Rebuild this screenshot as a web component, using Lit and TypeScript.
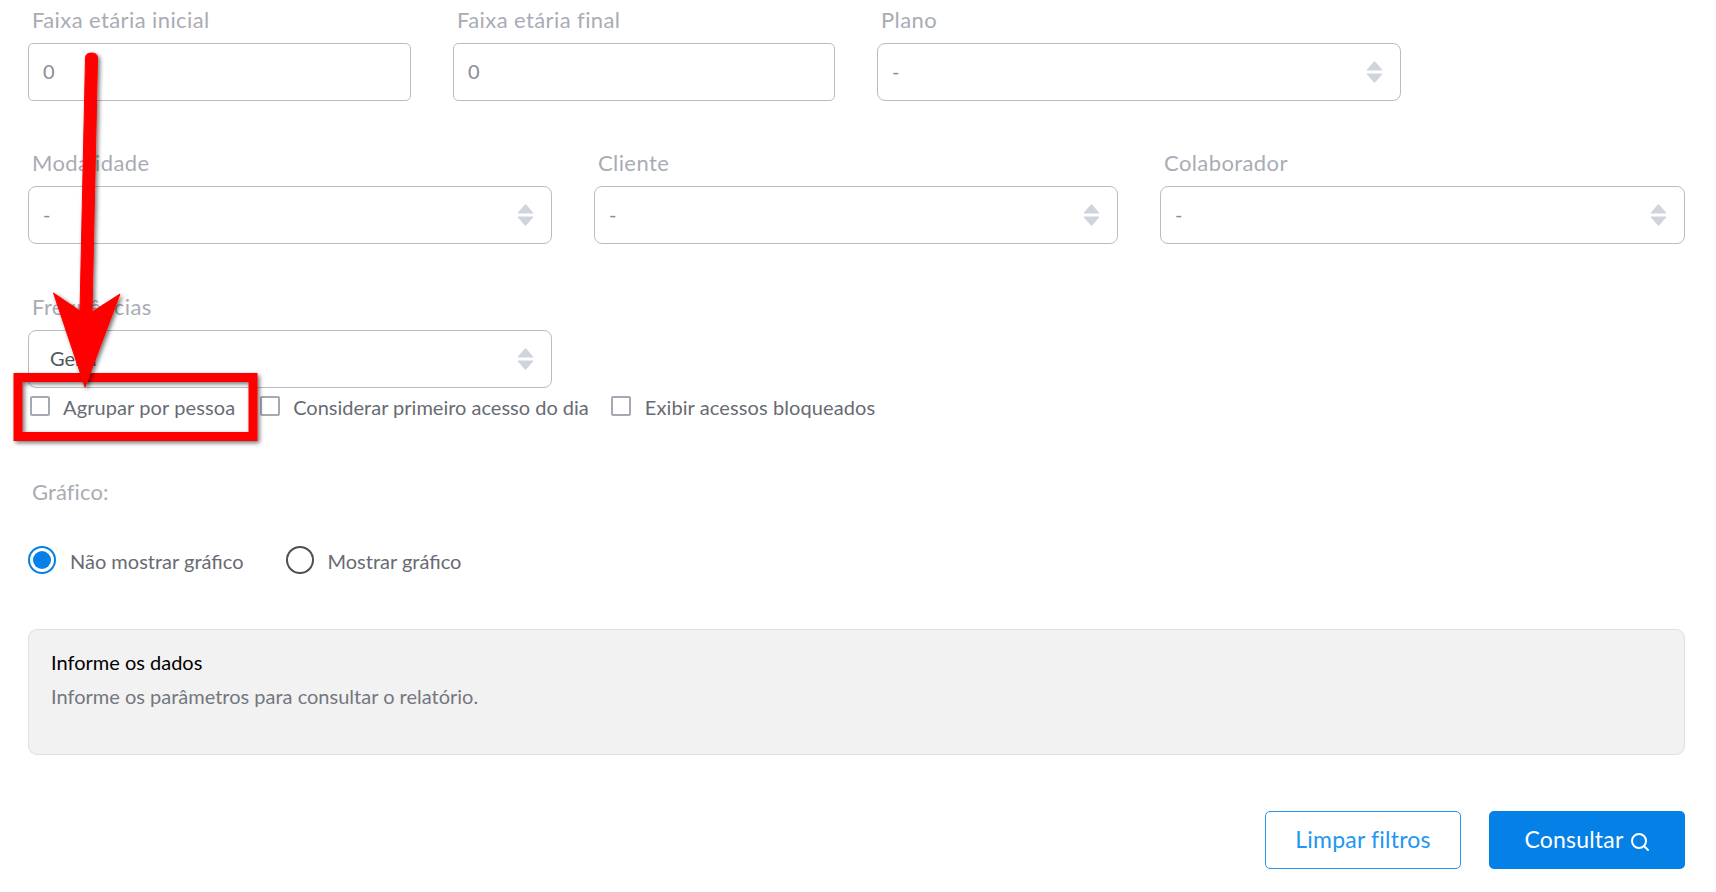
import { LitElement, html, css } from "lit";
import { customElement } from "lit/decorators.js";

const arrows = html`<svg class="sort" width="17" height="22" viewBox="0 0 17 22"><path d="M8.5 0.5 L16 9 H1 Z M1 13 H16 L8.5 21.5 Z" fill="#d0d3dc" stroke="#d0d3dc" stroke-linejoin="round"/></svg>`;

@customElement("app-root")
export class AppRoot extends LitElement {
  static styles = css`
    :host { display: block; width: 1716px; height: 892px; position: relative; overflow: hidden; background: #fff; font-family: "Lato", "Noto Sans", sans-serif; color: #6b6e75; }
    .page { padding: 7px 31px 0 28px; display: flex; flex-direction: column; }
    .row { display: flex; gap: 42px; }
    .row.first { margin-bottom: 49px; }
    .row.second { margin-bottom: 50px; }
    .field { display: flex; flex-direction: column; flex: none; }
    .w383 { width: 383px; } .w382 { width: 382px; } .w524 { width: 524px; } .w525 { width: 525px; }
    .label { font-size: 22px; line-height: 26px; height: 36px; padding-left: 4px; color: #a9acb5; letter-spacing: 0.4px; }
    .box { height: 58px; box-sizing: border-box; border: 1px solid #b9bbc7; border-radius: 5px; display: flex; align-items: center; justify-content: space-between; padding: 0 17px 2px 14px; font-size: 20px; color: #8a8d95; background: #fff; }
    .box.sel { border-radius: 8px; }
    .box.dark { color: #51555e; padding-left: 21px; }
    .sort { margin-top: 2px; }
    .checks { display: flex; height: 38px; align-items: center; font-size: 20px; color: #686b73; }
    .check { display: flex; align-items: center; gap: 13px; margin-right: 25px; }
    .cb { width: 20px; height: 20px; box-sizing: border-box; border: 2px solid #a6a9b3; border-radius: 2px; margin-top: -2px; }
    .c1 { margin-left: 2px; letter-spacing: 0.1px; }
    .c2 { margin-right: 22px; }
    .c3 { gap: 14px; letter-spacing: 0.1px; }
    .chart { margin-top: 53px; height: 37px; letter-spacing: 0.1px; }
    .radios { display: flex; margin-top: 25px; font-size: 20px; color: #686b73; align-items: center; height: 40px; }
    .radio { display: flex; align-items: center; gap: 14px; margin-right: 42px; }
    .rd { width: 28px; height: 28px; box-sizing: border-box; border-radius: 50%; border: 2px solid #4d4f55; margin-top: -3px; }
    .rd.on { border-color: #0480e6; display: flex; align-items: center; justify-content: center; }
    .rd.on::after { content: ""; width: 18px; height: 18px; border-radius: 50%; background: #0480e6; }
    .info { margin-top: 48px; height: 126px; width: 1657px; box-sizing: border-box; background: #f2f2f2; border: 1px solid #dfdfdf; border-radius: 9px; padding: 20px 22px; }
    .info h4 { margin: 0; font-size: 20px; line-height: 24px; font-weight: 400; color: #000; }
    .info p { margin: 10px 0 0; font-size: 20px; line-height: 24px; color: #74777e; }
    .actions { display: flex; justify-content: flex-end; gap: 28px; margin-top: 56px; width: 1657px; }
    .btn { height: 58px; box-sizing: border-box; border-radius: 5px; display: flex; align-items: center; justify-content: center; font-size: 23px; letter-spacing: 0.2px; padding-bottom: 2px; }
    .ghost { width: 196px; border: 1px solid #2196f3; color: #2196f3; background: #fff; }
    .primary { width: 196px; background: #0480e6; color: #fff; gap: 6px; }
    .search { margin-top: 5px; }
    .overlay { position: absolute; left: 0; top: 0; pointer-events: none; }
  `;

  field(name: string, value: string, cls: string, select = true, dark = false) {
    return html`<div class="field ${cls}"><span class="label">${name}</span>
      <div class="box ${select ? "sel" : ""} ${dark ? "dark" : ""}"><span>${value}</span>${select ? arrows : ""}</div></div>`;
  }

  render() {
    return html`
      <div class="page">
        <div class="row first">
          ${this.field("Faixa etária inicial", "0", "w383", false)}
          ${this.field("Faixa etária final", "0", "w382", false)}
          ${this.field("Plano", "-", "w524")}
        </div>
        <div class="row second">
          ${this.field("Modalidade", "-", "w524")}
          ${this.field("Cliente", "-", "w524")}
          ${this.field("Colaborador", "-", "w525")}
        </div>
        <div class="row">${this.field("Frequências", "Geral", "w524", true, true)}</div>
        <div class="checks">
          <div class="check c1"><span class="cb"></span>Agrupar por pessoa</div>
          <div class="check c2"><span class="cb"></span>Considerar primeiro acesso do dia</div>
          <div class="check c3"><span class="cb"></span>Exibir acessos bloqueados</div>
        </div>
        <span class="label chart">Gráfico:</span>
        <div class="radios">
          <div class="radio"><span class="rd on"></span>Não mostrar gráfico</div>
          <div class="radio"><span class="rd"></span>Mostrar gráfico</div>
        </div>
        <div class="info"><h4>Informe os dados</h4><p>Informe os parâmetros para consultar o relatório.</p></div>
        <div class="actions">
          <div class="btn ghost">Limpar filtros</div>
          <div class="btn primary">Consultar
            <svg class="search" width="20" height="20" viewBox="0 0 20 20" fill="none" stroke="#fff" stroke-width="2"><circle cx="9" cy="9" r="7"/><path d="M14 14l4 4" stroke-linecap="round"/></svg>
          </div>
        </div>
      </div>
      <svg class="overlay" width="1716" height="892" viewBox="0 0 1716 892">
        <defs><filter id="s" x="-20%" y="-20%" width="140%" height="140%"><feDropShadow dx="2" dy="2" stdDeviation="2" flood-color="#000" flood-opacity="0.55"/></filter></defs>
        <rect x="18" y="377.5" width="235" height="59" fill="none" stroke="#f00" stroke-width="9" filter="url(#s)"/>
        <path d="M85.5 58 Q85.5 53 91.5 53 Q97.5 53 97.5 58 L92 312 L120 294 L85 387 L53.5 293 L80 311 Z" fill="#f00" stroke="#f00" stroke-width="1" stroke-linejoin="round" filter="url(#s)"/>
      </svg>
    `;
  }
}
